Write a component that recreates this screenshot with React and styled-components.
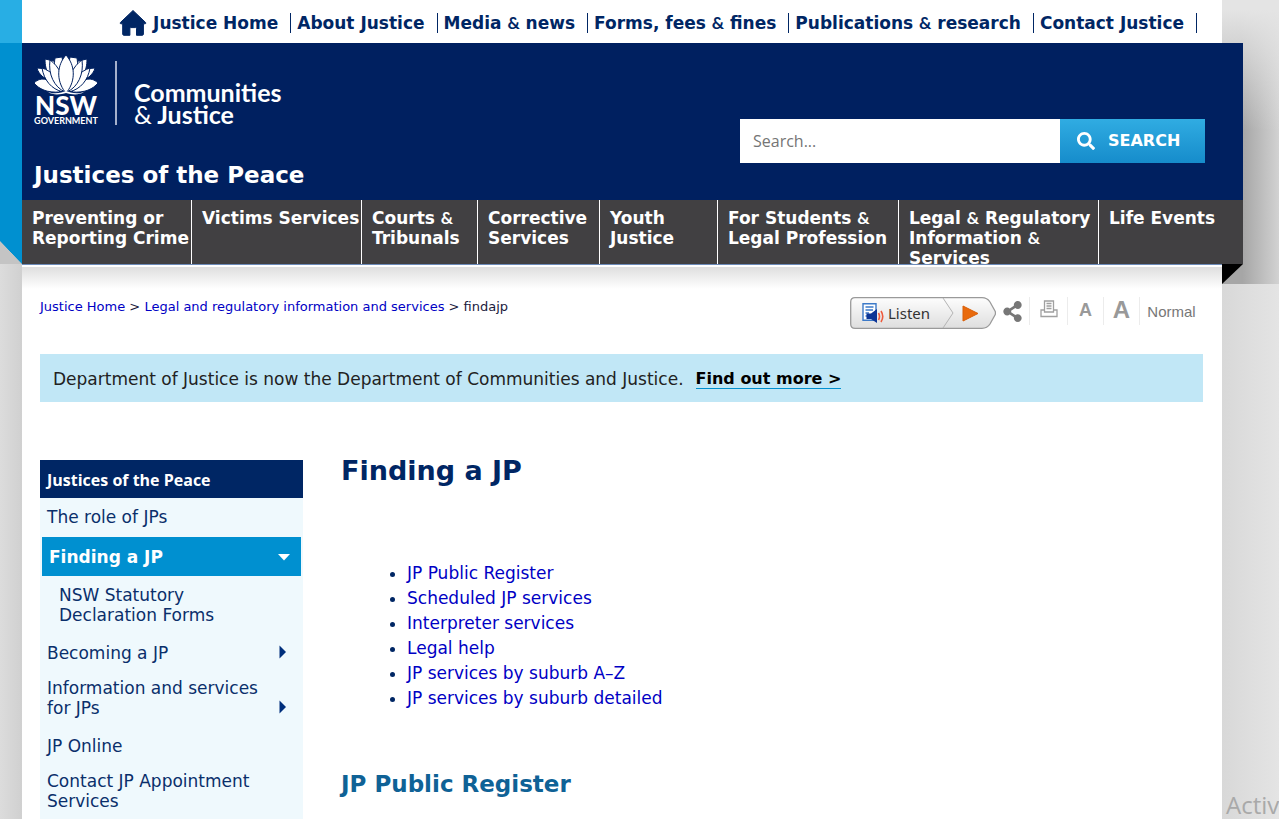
import React from 'react'
import styled, { createGlobalStyle } from 'styled-components';
import { FaSearch, FaShareAlt } from 'react-icons/fa';

const topLinks = [
   'Justice Home',
   'About Justice',
   'Media & news',
   'Forms, fees & fines',
   'Publications & research',
   'Contact Justice',
]

const sections = [
   'Preventing or Reporting Crime',
   'Victims Services',
   'Courts & Tribunals',
   'Corrective Services',
   'Youth Justice',
   'For Students & Legal Profession',
   'Legal & Regulatory Information & Services',
   'Life Events',
]

const pageLinks = [
   'JP Public Register',
   'Scheduled JP services',
   'Interpreter services',
   'Legal help',
   'JP services by suburb A–Z',
   'JP services by suburb detailed',
]

// the ampersand is set in a lighter face than the words around it
const Label = ({ text }) => text.split('&').map((part, i) => (
   <React.Fragment key={i}>
      {i > 0 && <Amp>&amp;</Amp>}
      {part}
   </React.Fragment>
))

const HomeIcon = () => (
   <svg width="28" height="26" viewBox="0 0 28 26" aria-hidden="true">
      <path d="M14 .5 26.500 12.400c.6.7.3 1.400-.6 1.400H24.400V24c0 .8-.5 1.300-1.300 1.300H17.500V18.500c0-.6-.3-.9-.9-.9H11.800c-.6 0-.9.3-.9.9V25.300H5c-.8 0-1.300-.5-1.300-1.300V13.800H2.100C1.200 13.800.9 13.100 1.500 12.400Z" fill="#002664" stroke="#002664" strokeLinejoin="round" />
   </svg>
)

const Waratah = () => (
   <svg width="64" height="40" viewBox="0 0 64 40" aria-hidden="true">
      <g fill="#fff" stroke="#002060" strokeWidth="1">
         <path d="M3 13 14 14 17 24 9 22C6 19 4 17 3 13Z" />
         <path d="M61 13 50 14 47 24 55 22C58 19 60 17 61 13Z" />
         <path d="M11 4 20 6 24 18 16 22C12 16 11 10 11 4Z" />
         <path d="M53 4 44 6 40 18 48 22C52 16 53 10 53 4Z" />
         <path d="M21 3 28 2 30 14 24 22C20 15 20 9 21 3Z" />
         <path d="M43 3 36 2 34 14 40 22C44 15 44 9 43 3Z" />
         <path d="M0 28C7 21 17 23 26 37 13 38 5 34 0 28Z" />
         <path d="M64 28C57 21 47 23 38 37 51 38 59 34 64 28Z" />
         <path d="M8 13C18 16 26 25 29 37 17 34 10 25 8 13Z" />
         <path d="M56 13C46 16 38 25 35 37 47 34 54 25 56 13Z" />
         <path d="M16 5C25 11 31 24 31 37 20 32 14 19 16 5Z" />
         <path d="M48 5C39 11 33 24 33 37 44 32 50 19 48 5Z" />
         <path d="M32 0C41 10 42 25 33 37H31C22 25 23 10 32 0Z" />
      </g>
      <path d="M14 37C22 40 28 37 32 36 36 37 42 40 50 37 44 41 36 39 32 38 28 39 20 41 14 37Z" fill="#fff" />
   </svg>
)

const ListenShape = () => (
   <Shape width="146" height="32" viewBox="0 0 146 32" aria-hidden="true">
      <defs>
         <linearGradient id="listenFill" x1="0" y1="0" x2="0" y2="1">
            <stop offset="0" stopColor="#fdfdfd" />
            <stop offset="1" stopColor="#dedede" />
         </linearGradient>
      </defs>
      <path d="M5 .7H132C136 .7 138 2 140 5L145 14Q146 16 145 18L140 27C138 30 136 31.300 132 31.300H5Q.7 31.300 .7 27V5Q.7 .7 5 .7Z" fill="url(#listenFill)" stroke="#9a9a9a" strokeWidth="1.300" />
      <path d="M93 1 103 16 93 31" fill="none" stroke="#b4b4b4" />
      <path d="M113 9 128 16.500 113 24Z" fill="#e96a0c" stroke="#d95f08" strokeWidth="1" strokeLinejoin="round" />
   </Shape>
)

const SpeakerIcon = () => (
   <svg width="22" height="20" viewBox="0 0 22 20" aria-hidden="true">
      <path d="M1 .8H14V17.200H1Z" fill="#fff" stroke="#3d7ac8" strokeWidth="1.400" />
      <path d="M3.500 4H11.500M3.500 7H11M3.500 10H7M3.500 13H5" stroke="#3d7ac8" strokeWidth="1.300" />
      <path d="M4.500 10.500H9L15 6V20L9 16H4.500Z" fill="#0c3596" />
      <path d="M16.500 10Q18.500 13.500 16.500 17M19 8Q22.500 13.500 19 19" fill="none" stroke="#ee5a3c" strokeWidth="1.600" />
   </svg>
)

const PrintIcon = () => (
   <svg width="18" height="22" viewBox="0 0 18 22" fill="none" stroke="#a0a0a0" strokeWidth="1.300" aria-hidden="true">
      <path d="M4.500 12V1H13.500V12ZM6.500 3.500H11.500M6.500 6H11.500M6.500 8.500H11.500" />
      <path d="M4.500 10H1V16.500H17V10H13.500" />
   </svg>
)

const Arrow = ({ down }) => (
   <svg width="14" height="14" viewBox="0 0 14 14" aria-hidden="true">
      {down
         ? <path d="M1 4H13L7 10.500Z" fill="#fff" />
         : <path d="M3.500 .5 10 7 3.500 13.500Z" fill="#002f7c" />}
   </svg>
)

const App = () => {
   return (
      <>
         <GlobalStyle />
         <Page>
            <LeftRail />
            <Sheet>
               <TopNav aria-label="Justice">
                  <HomeIcon />
                  {topLinks.map((e) => <TopLink key={e} href="#"><Label text={e} /></TopLink>)}
               </TopNav>

               <Header>
                  <Banner>
                     <Brand>
                        <Logo>
                           <Crest>
                              <Waratah />
                              <Nsw>NSW</Nsw>
                              <Gov>GOVERNMENT</Gov>
                           </Crest>
                           <Department>Communities<br /><span>&amp;</span> Justice</Department>
                        </Logo>
                        <SiteTitle>Justices of the Peace</SiteTitle>
                     </Brand>
                     <Search role="search" onSubmit={(e) => e.preventDefault()}>
                        <SearchInput type="text" placeholder="Search..." aria-label="Search" />
                        <SearchButton type="submit"><FaSearch size={18} />SEARCH</SearchButton>
                     </Search>
                  </Banner>
                  <MainNav aria-label="Sections">
                     {sections.map((e) => <Section key={e} href="#"><Label text={e} /></Section>)}
                  </MainNav>
                  <Fold />
               </Header>

               <Content>
                  <Tools>
                     <Crumbs aria-label="Breadcrumb">
                        <a href="#">Justice Home</a> &gt; <a href="#">Legal and regulatory information and services</a> &gt; findajp
                     </Crumbs>
                     <Actions>
                        <Listen type="button">
                           <ListenShape />
                           <SpeakerIcon />
                           <span>Listen</span>
                        </Listen>
                        <Tool type="button" aria-label="Share" $width={33}><FaShareAlt size={21} /></Tool>
                        <Tool type="button" aria-label="Print" $width={38}><PrintIcon /></Tool>
                        <Tool type="button" $width={36} $size={18} $bold>A</Tool>
                        <Tool type="button" $width={36} $size={24} $bold>A</Tool>
                        <Tool type="button" $width={64} $size={15}>Normal</Tool>
                     </Actions>
                  </Tools>

                  <Notice>
                     Department of Justice is now the Department of Communities and Justice.
                     <a href="#">Find out more &gt;</a>
                  </Notice>

                  <Columns>
                     <SideNav aria-label="Justices of the Peace">
                        <SideTitle>Justices of the Peace</SideTitle>
                        <SideItem href="#">The role of JPs</SideItem>
                        <Current href="#">Finding a JP<Arrow down /></Current>
                        <SideItem href="#" $nested $tall>NSW Statutory Declaration Forms</SideItem>
                        <SideItem href="#">Becoming a JP<Arrow /></SideItem>
                        <SideItem href="#" $tall>Information and services for JPs<Arrow /></SideItem>
                        <SideItem href="#">JP Online</SideItem>
                        <SideItem href="#" $tall>Contact JP Appointment Services</SideItem>
                     </SideNav>
                     <Main>
                        <h1>Finding a JP</h1>
                        <ul>
                           {pageLinks.map((e) => <li key={e}><a href="#">{e}</a></li>)}
                        </ul>
                        <h2>JP Public Register</h2>
                     </Main>
                  </Columns>
               </Content>
            </Sheet>
            <RightRail>
               <Watermark>Activ</Watermark>
            </RightRail>
         </Page>
      </>
   )
}

export default App

const GlobalStyle = createGlobalStyle`
    *{
      box-sizing: border-box;
    }
    body{
      margin: 0;
      background: #dcdcdc;
      font-family: Verdana, 'DejaVu Sans', sans-serif;
      font-size: 17px;
      line-height: 20px;
      color: #002664;
    }
    a{
      text-decoration: none;
    }
    button{
      font: inherit;
      border: 0;
      padding: 0;
      background: none;
      cursor: pointer;
    }
`;

const Page = styled.div`
    display: grid;
    grid-template-columns: 22px minmax(0, 1fr) 57px;
    min-height: 100vh;
`;

const LeftRail = styled.div`
    background: linear-gradient(#28aee4 43px, #0090d0 43px) top / 100% 241px no-repeat,
      linear-gradient(to bottom left, #0090d0 49%, #c4c4c4 51%) 0 241px / 100% 23px no-repeat,
      linear-gradient(to right, #dcdcdc, #d0d0d0);
`;

const RightRail = styled.div`
    display: flex;
    align-items: flex-end;
    padding-left: 4px;
    overflow: hidden;
    background: linear-gradient(rgba(228, 228, 228, 1) 10px, rgba(228, 228, 228, .6) 60px, rgba(228, 228, 228, 0) 130px) 0 0 / 100% 284px no-repeat,
      linear-gradient(to right, #a6a6a6 36%, #d2d2d2) 0 0 / 100% 284px no-repeat,
      linear-gradient(to right, #d8d8d8, #e4e4e4);
`;

const Watermark = styled.p`
    margin: 0;
    font-family: 'Segoe UI', 'Open Sans', sans-serif;
    font-size: 24px;
    line-height: 30px;
    color: #a9a9a9;
`;

const Sheet = styled.div`
    display: flex;
    flex-direction: column;
    background: #fff;
`;

const Amp = styled.span`
    font-family: Lato, sans-serif;
`;

const TopNav = styled.nav`
    display: flex;
    justify-content: flex-end;
    align-items: center;
    height: 43px;
    padding: 2px 25px 0 0;
`;

const TopLink = styled.a`
    padding: 0 12px 0 6px;
    border-right: 1px solid #002664;
    font-weight: bold;
    white-space: nowrap;
    color: #002664;
`;

const Header = styled.header`
    position: relative;
    margin-right: -21px;
`;

const Banner = styled.div`
    display: flex;
    justify-content: space-between;
    align-items: flex-end;
    height: 157px;
    padding: 0 38px 0 12px;
    background: #002060;
`;

const Brand = styled.div`
    display: flex;
    flex-direction: column;
    gap: 38px;
    padding-bottom: 13px;
`;

const Logo = styled.div`
    display: flex;
    color: #fff;
    font-family: Lato, sans-serif;
`;

const Crest = styled.div`
    display: flex;
    flex-direction: column;
    align-items: center;
    width: 64px;
`;

const Nsw = styled.span`
    font-size: 26px;
    font-weight: 900;
    line-height: 21px;
`;

const Gov = styled.span`
    font-size: 9px;
    font-weight: bold;
    line-height: 9px;
`;

const Department = styled.p`
    margin: 6px 0 0 17px;
    padding: 20px 0 0 17px;
    border-left: 2px solid #a5b0cc;
    font-size: 25px;
    font-weight: bold;
    line-height: 22px;

    span{
      font-weight: 400;
    }
`;

const SiteTitle = styled.p`
    margin: 0;
    font-size: 23px;
    font-weight: bold;
    line-height: 24px;
    color: #fff;
`;

const Search = styled.form`
    display: flex;
    width: 465px;
    height: 44px;
    margin-bottom: 37px;
`;

const SearchInput = styled.input`
    flex: 1;
    min-width: 0;
    padding: 0 13px;
    border: 0;
    background: #fff;
    font-family: 'Segoe UI', 'Open Sans', sans-serif;
    font-size: 16px;

    &::placeholder{
      color: #757575;
    }
`;

const SearchButton = styled.button`
    display: flex;
    align-items: center;
    gap: 13px;
    width: 145px;
    padding-left: 17px;
    background: linear-gradient(#30ace2, #168ccb);
    font-size: 16px;
    font-weight: bold;
    color: #fff;
`;

const MainNav = styled.nav`
    display: grid;
    grid-template-columns: 170fr 170fr 116fr 122fr 118fr 181fr 200fr 144fr;
    height: 64px;
    overflow: hidden;
    background: #414042;
`;

const Section = styled.a`
    padding: 8px 0 0 10px;
    border-right: 1px solid #fff;
    font-weight: bold;
    color: #fff;

    &:last-child{
      border-right: 0;
    }
`;

const Fold = styled.div`
    position: absolute;
    top: 100%;
    right: 0;
    width: 21px;
    height: 20px;
    background: #000;
    clip-path: polygon(0 0, 100% 0, 0 100%);
`;

const Content = styled.div`
    display: flex;
    flex: 1;
    flex-direction: column;
    padding: 32px 19px 0 18px;
    border-top: 1px solid #6d8bb8;
    background: linear-gradient(#fff 2px, #dedede 2px, #fff 24px);
`;

const Tools = styled.div`
    display: flex;
    justify-content: space-between;
    align-items: flex-start;
`;

const Crumbs = styled.nav`
    font-size: 13px;
    color: #1a1a3c;

    a{
      color: #0000c4;
    }
`;

const Actions = styled.div`
    display: flex;
`;

const Listen = styled.button`
    position: relative;
    display: flex;
    align-items: center;
    gap: 4px;
    width: 146px;
    height: 32px;
    padding-left: 12px;
    font-family: 'Noto Sans', sans-serif;
    font-size: 15px;
    color: #333;

    span, svg{
      z-index: 1;
    }
`;

const Shape = styled.svg`
    position: absolute;
    inset: 0;
    z-index: 0 !important;
`;

const Tool = styled.button`
    display: flex;
    justify-content: center;
    align-items: flex-end;
    width: ${({ $width }) => $width}px;
    height: 28px;
    padding-bottom: 3px;
    border-left: 1px solid #ececec;
    font-family: Arial, 'Liberation Sans', sans-serif;
    font-size: ${({ $size }) => $size || 16}px;
    font-weight: ${({ $bold }) => $bold ? 'bold' : 'normal'};
    line-height: ${({ $bold }) => $bold ? '24px' : '20px'};
    color: ${({ $bold }) => $bold ? '#999' : '#777'};

    &:nth-child(2){
      border-left: 0;
    }
`;

const Notice = styled.div`
    display: flex;
    align-items: center;
    gap: 12px;
    height: 48px;
    margin-top: 25px;
    padding: 2px 13px 0;
    background: #c1e7f6;
    color: #222;

    a{
      border-bottom: 1px solid #0090d0;
      font-size: 16px;
      line-height: 18px;
      font-weight: bold;
      color: #000;
    }
`;

const Columns = styled.div`
    display: grid;
    flex: 1;
    grid-template-columns: 263px minmax(0, 1fr);
    gap: 38px;
    margin-top: 58px;
`;

const SideNav = styled.nav`
    display: flex;
    flex-direction: column;
    background: #eff9fd;
`;

const SideTitle = styled.p`
    margin: 0;
    padding: 10px 7px 8px;
    background: #002664;
    font-family: 'Segoe UI', 'Open Sans', sans-serif;
    font-size: 16px;
    font-weight: bold;
    color: #fff;
`;

const SideItem = styled.a`
    display: flex;
    justify-content: space-between;
    align-items: flex-end;
    padding: 9px ${({ $nested }) => $nested ? '60px' : '13px'} ${({ $tall }) => $tall ? '9px' : '6px'} ${({ $nested }) => $nested ? '19px' : '7px'};
    color: #0a2f6b;

    svg{
      flex: none;
      margin-bottom: 4px;
    }
`;

const Current = styled(SideItem)`
    align-items: center;
    margin: 4px 2px 0;
    padding: 10px 10px 9px 7px;
    background: #0090d0;
    font-weight: bold;
    color: #fff;

    svg{
      margin: 0;
    }
`;

const Main = styled.main`
    h1{
      margin: 0;
      font-size: 27px;
      line-height: 22px;
    }

    ul{
      margin: 79px 0 0;
      padding-left: 66px;
      line-height: 25px;
    }

    ul a{
      color: #0000c4;
    }

    h2{
      margin: 60px 0 0;
      font-size: 23px;
      line-height: 26px;
      color: #0f6296;
    }
`;
